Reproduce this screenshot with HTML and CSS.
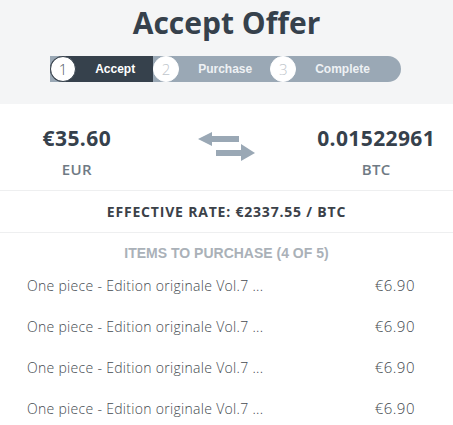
FILE: index.html
```html
<!DOCTYPE html>
<html lang="en">
    <head>
        <meta charset="UTF-8" />
        <title>Accept Offer</title>
        <link rel="stylesheet" href="styles.css">
    </head>
    <body>
        <div class="header">
            <h1>Accept Offer</h1>

            <div class="stepper">
                <div class="step active">
                    <span class="circle">1</span>
                    <span class="label">Accept</span>
                </div>
                <div class="step">
                    <span class="circle">2</span>
                    <span class="label">Purchase</span>
                </div>
                <div class="step last">
                    <span class="circle">3</span>
                    <span class="label">Complete</span>
                </div>
            </div>
        </div>

        <div class="exchange">
            <div class="amount">
                <div class="value">€35.60</div>
                <div class="currency">EUR</div>
            </div>
            <div class="swap">
                <svg width="57" height="31" viewBox="0 0 57 31">
                    <polygon points="0,8 14,1 14,15" fill="#9aa8b5" />
                    <rect x="13" y="5" width="28" height="6" fill="#9aa8b5" />
                    <rect x="18" y="19" width="26" height="6" fill="#9aa8b5" />
                    <polygon points="43,13 57,22 43,30" fill="#9aa8b5" />
                </svg>
            </div>
            <div class="amount">
                <div class="value">0.01522961</div>
                <div class="currency">BTC</div>
            </div>
        </div>

        <div class="rate">EFFECTIVE RATE: €2337.55 / BTC</div>

        <div class="items-title">ITEMS TO PURCHASE (4 OF 5)</div>
        <div class="items">
            <div class="item">
                <span>One piece - Edition originale Vol.7 ...</span>
                <span class="price">€6.90</span>
            </div>
            <div class="item">
                <span>One piece - Edition originale Vol.7 ...</span>
                <span class="price">€6.90</span>
            </div>
            <div class="item">
                <span>One piece - Edition originale Vol.7 ...</span>
                <span class="price">€6.90</span>
            </div>
            <div class="item">
                <span>One piece - Edition originale Vol.7 ...</span>
                <span class="price">€6.90</span>
            </div>
        </div>
    </body>
</html>
```

FILE: styles.css
```css
body {
  margin: 0;
  font-family: "Open Sans", sans-serif;
  color: #36414c;
  background-color: #fff;
}

.header {
  background-color: #f4f5f6;
  height: 104px;
  padding-top: 4px;
  box-sizing: border-box;
  text-align: center;
}

h1 {
  margin: 0;
  font-size: 30px;
  line-height: 38px;
  font-weight: 700;
  color: #36414c;
}

.stepper {
  display: inline-flex;
  margin-top: 14px;
  margin-left: -2px;
  background-color: #9aa8b5;
  border-radius: 0 13px 13px 0;
}

.step {
  display: flex;
  align-items: center;
  height: 26px;
}

.step.active {
  background-color: #36414c;
  border-radius: 13px 0 0 13px;
}

.step.last {
  padding-right: 13px;
}

.circle {
  width: 26px;
  height: 26px;
  box-sizing: border-box;
  border-radius: 50%;
  background-color: #fff;
  border: 1px solid #fff;
  color: #c0c6cc;
  font-size: 15px;
  font-weight: 300;
  line-height: 24px;
}

.step.active .circle {
  border-color: #36414c;
  color: #555d65;
}

.label {
  margin: 0 18px 0 19px;
  font-family: "Liberation Sans", Arial, sans-serif;
  font-size: 12px;
  font-weight: 700;
  color: #eef1f4;
}

.step.active .label {
  color: #fff;
}

.exchange {
  display: grid;
  grid-template-columns: 1fr 1fr 1fr;
  align-items: center;
  padding: 15px 2px 6px;
  height: 87px;
  box-sizing: border-box;
  border-bottom: 1px solid #eeeff0;
  text-align: center;
}

.value {
  font-size: 21px;
  font-weight: 700;
  letter-spacing: 0.4px;
  line-height: 26px;
  color: #36414c;
}

.currency {
  margin-top: 8px;
  font-size: 15px;
  font-weight: 600;
  letter-spacing: 0.3px;
  line-height: 20px;
  color: #6f7a84;
}

.swap {
  display: flex;
  justify-content: center;
  margin-top: -10px;
}

.rate {
  height: 41px;
  line-height: 41px;
  border-bottom: 1px solid #eeeff0;
  text-align: center;
  font-size: 14px;
  font-weight: 700;
  letter-spacing: 0.8px;
  color: #3b4148;
}

.items-title {
  padding-top: 10px;
  line-height: 20px;
  text-align: center;
  font-family: "Liberation Sans", Arial, sans-serif;
  font-size: 14px;
  font-weight: 700;
  color: #aab1b8;
}

.items {
  padding: 0 38px 0 27px;
}

.item {
  display: flex;
  justify-content: space-between;
  height: 41px;
  line-height: 45px;
  font-size: 14px;
  font-weight: 300;
  letter-spacing: 0.3px;
  color: #444a50;
}

.price {
  font-size: 15px;
  letter-spacing: 0.5px;
}
```
